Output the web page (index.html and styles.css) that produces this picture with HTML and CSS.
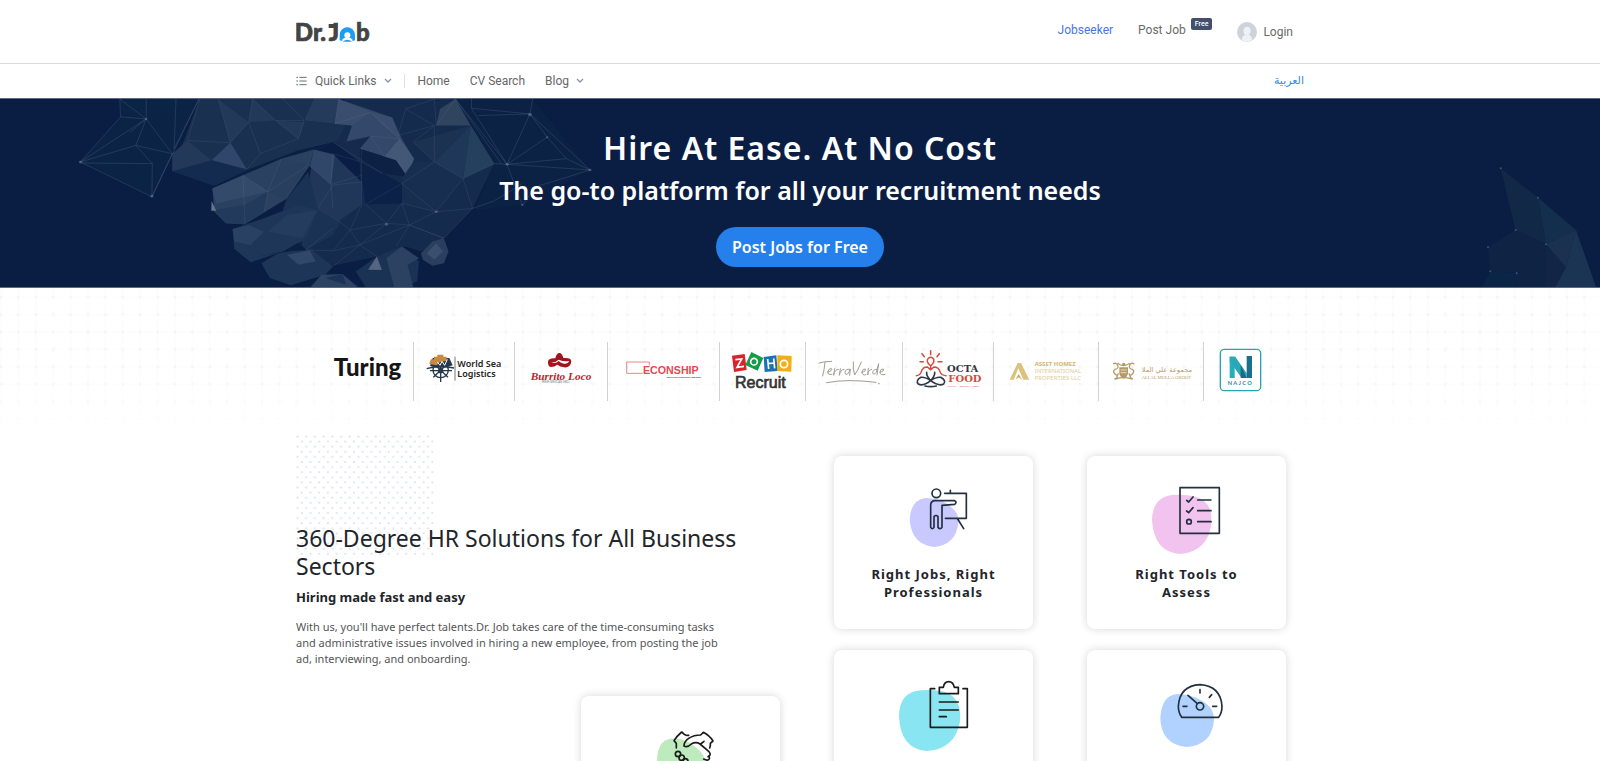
FILE: index.html
```html
<!DOCTYPE html>
<html lang="en">
<head>
<meta charset="utf-8">
<title>Dr.Job</title>
<link rel="stylesheet" href="styles.css">
</head>
<body>
<header class="header">
  <div class="container header-row">
    <a href="#" class="logo" aria-label="Dr.Job">
      <svg width="76" height="38" viewBox="0 -26 228 114">
        <g class="logo-text"><text x="-4" y="59">D</text><text x="51" y="59">r</text><text x="73" y="59">.</text><text x="98" y="59">J</text><text x="180" y="59">b</text></g>
        <path d="M98 7h26v12H98z" fill="#444"/>
        <path d="M131 56V40a23 23 0 0 1 46 0v16l-8 2v-5q-15-12-30 0v5z" fill="#1c9cf2"/>
        <circle cx="154" cy="41" r="9" fill="#fff"/>
        <path d="M140 60q14-12 28 0z" fill="#1c9cf2"/>
      </svg>
    </a>
    <nav class="account">
      <a href="#" class="active">Jobseeker</a>
      <a href="#" class="post">Post Job<span class="badge">Free</span></a>
      <a href="#" class="login">
        <svg width="20" height="20" viewBox="0 0 60 60"><circle cx="30" cy="30" r="30" fill="#ced2db"/><path d="M15 54q-1-13 10-15-6-5-6-13 1-12 11-12t11 12q0 8-6 13 11 2 10 15-15 10-30 0z" fill="#f0f1f5"/></svg>
        Login
      </a>
    </nav>
  </div>
</header>
<div class="subnav">
  <div class="container subnav-row">
    <nav class="links">
      <button type="button" class="quick">
        <svg width="11" height="10" viewBox="0 0 33 30"><path d="M10 4h22M10 15h22M10 26h22M1 4h5M1 15h5M1 26h5" stroke="#4c586a" stroke-width="2.6"/></svg>
        <span>Quick Links</span>
        <svg width="8" height="6" viewBox="0 0 8 6"><path d="M1 1l3 3 3-3" fill="none" stroke="#8792a4" stroke-width="1.3"/></svg>
      </button>
      <a href="#">Home</a>
      <a href="#">CV Search</a>
      <a href="#" class="blog">Blog <svg width="8" height="6" viewBox="0 0 8 6"><path d="M1 1l3 3 3-3" fill="none" stroke="#8792a4" stroke-width="1.3"/></svg></a>
    </nav>
    <a href="#" class="arabic" lang="ar">العربية</a>
  </div>
</div>
<main>
<section class="hero">
  <svg class="hands" viewBox="0 10 1568 567" preserveAspectRatio="none" aria-hidden="true">
    <g fill="#0c2848">
      <path d="M210 200L315 64 313 10H520L450 175 397 305z" opacity=".65"/>
      <path d="M1190 10H1392L1542 224 1365 330 1240 345 1292 205z" opacity=".4"/>
    </g>
    <path d="M900 10H1190L1292 205 1235 340 1160 430 1100 470 1060 455 985 485 860 515 800 465 850 380 945 330 940 200 870 140 900 60z" fill="#152b4e"/>
    <path d="M522 10H830L795 75 905 88 880 138 780 165 645 225 560 272 450 228z" fill="#1a3051"/>
    <path d="M450 175L490 135 553 195 530 215 450 228zM660 10L720 75 650 80zM720 75L795 80 780 130zM570 10L650 80 602 142z" fill="#22395a"/>
    <path d="M553 195L602 142 645 222z" fill="#30466a"/>
    <path d="M450 228L553 195 645 225 560 272z" fill="#122b4e"/>
    <path d="M645 225L780 165 880 138 830 165 700 205 570 275z" fill="#0b2144"/>
    <path d="M820 10H885L875 85 795 75z" fill="#253b5c"/>
    <path d="M885 10L1025 66 1050 130 1082 190 1065 245 1035 195 940 160 968 122 905 138 920 90 875 85z" fill="#33486a"/>
    <path d="M885 10L968 50 920 90 875 85zM968 50L1025 66 1045 130 1005 95z" fill="#3a4d6e"/>
    <path d="M1005 185L1045 130 1082 190 1065 245z" fill="#435777"/>
    <path d="M940 160L1035 195 1065 245 1000 235 945 240z" fill="#0d2145"/>
    <path d="M1050 250L1080 200 1135 200 1210 250 1140 350 1050 325z" fill="#182e50"/>
    <path d="M1190 10L1230 90 1140 90 1150 40z" fill="#30445f"/>
    <path d="M1230 90L1292 205 1210 250z" fill="#253f5e"/>
    <path d="M1230 90L1210 250 1135 200z" fill="#1f3859"/>
    <path d="M1135 200L1230 90 1080 140z" fill="#1b3253"/>
    <path d="M555 280L635 240 735 190 820 162 810 210 750 310 640 388 590 385 560 350z" fill="#2a4161"/>
    <path d="M555 280L635 240 700 290 565 325z" fill="#344a6b"/>
    <path d="M700 290L735 190 805 210 740 310z" fill="#293f60"/>
    <path d="M560 345L640 330 700 290 690 350 640 388 590 385z" fill="#223a5b"/>
    <path d="M553 318L565 347 552 347z" fill="#65748b"/>
    <path d="M820 162L870 175 900 210 945 260 945 330 885 378 830 340 805 280z" fill="#20375a"/>
    <path d="M820 162L875 180 865 268 810 213z" fill="#31476a"/>
    <path d="M945 240L1000 235 1050 265 1050 325 955 328z" fill="#0c2148"/>
    <path d="M740 340L750 310 805 230 830 340 890 380 870 420 800 465 740 400z" fill="#1a3254"/>
    <path d="M608 402L690 370 780 330 830 345 800 430 740 470 655 502 612 462z" fill="#1e3758"/>
    <path d="M608 402L650 390 690 410 655 450 612 440z" fill="#294263"/>
    <path d="M700 410L750 360 830 345 790 430z" fill="#243c5d"/>
    <path d="M683 505L735 470 815 465 870 515 850 540 760 572 705 550z" fill="#1d3657"/>
    <path d="M750 480L810 467 825 500 780 510z" fill="#30486a"/>
    <path d="M812 577L840 540 895 538 935 577z" fill="#2c4363"/>
    <path d="M850 550L895 538 905 570z" fill="#1b3456"/>
    <path d="M930 530L985 485 1050 455 1095 500 1090 560 1060 577H955z" fill="#1a3354"/>
    <path d="M1010 490L1050 455 1095 490 1065 510 1080 577 1030 577z" fill="#2c4262"/>
    <path d="M962 525L985 485 998 526z" fill="#536580"/>
    <path d="M1100 475L1130 440 1160 430 1172 470 1160 505 1130 513 1105 495z" fill="#293f60"/>
    <path d="M1115 475L1140 445 1158 470 1135 495z" fill="#3a4f6e"/>
    <path d="M650 490L740 470 790 440 785 465 700 480z" fill="#0b2144"/>
    <g fill="none" stroke="#5c7391" stroke-width="1.6" opacity=".5">
      <path d="M210 200L315 64 382 70 450 175 397 305 210 200 382 70V10M210 200L355 150 450 175M355 150L382 70M210 203L398 205 397 305M398 205L355 150M460 10L455 160 520 10 397 305M315 64L313 10 382 70 340 110"/>
      <path d="M1190 10L1325 207 1385 55 1392 10M1232 38L1385 55 1542 224 1325 207 1232 38V10M1385 55L1430 125 1480 190 1542 224 1400 275 1365 330 1325 207M1430 125L1325 207 1480 190M1250 60L1385 55M1190 10L1310 205M1292 205L1325 207M1235 340L1290 318 1365 265"/>
    </g>
    <g fill="none" stroke="#7d8fa6" stroke-width="1.3" opacity=".3">
      <path d="M522 10L490 135 602 142 570 10M602 142L650 80 660 10 720 75 780 130 680 175 650 80M795 75L720 75M680 175L645 222M740 10L795 75 780 130M885 10L875 85 968 50 1045 130 1005 185 968 122 1045 130"/>
      <path d="M635 240L640 385M635 240L700 290 735 190M700 290L690 350M805 210L700 290M810 213L865 268 870 175M865 268L870 340M865 268L945 240M945 260L870 270 830 340 885 378 915 405 945 330M1050 265L955 328 1010 385 915 405 870 468 940 450 1010 385 1070 390 1140 350 1210 250 1135 200 1050 265 1140 350 1050 325 1070 390 1035 455M1010 385L1050 325M1140 350L1235 340 1160 430 1070 390M1235 340L1210 250 1292 205M940 450L985 485M940 450L870 515M870 468L800 465 870 400M915 405L940 450 1070 390 1160 430"/>
      <path d="M1080 140L1135 90 1060 40 1135 10 1140 90 1190 10M1060 40L1040 120 1135 90 1135 200M1080 140L1135 200M870 175L945 200 1000 235 870 140M945 160L945 330"/>
    </g>
    <g fill="#8393aa" opacity=".45"><circle cx="210" cy="200" r="4"/><circle cx="397" cy="303" r="4"/><circle cx="382" cy="70" r="3"/><circle cx="1385" cy="57" r="5"/><circle cx="1325" cy="207" r="4"/><circle cx="1542" cy="224" r="4"/><circle cx="1430" cy="125" r="3"/><circle cx="1365" cy="330" r="3"/><circle cx="1010" cy="388" r="4"/><circle cx="1140" cy="350" r="4"/></g>
  </svg>
  <svg class="shape" viewBox="0 0 480 411" aria-hidden="true">
    <path d="M182 55L294 143 318 283 227 240z" fill="#122847"/><path d="M294 143L408 240 318 283z" fill="#142f4e"/>
    <path d="M318 283L408 240 377 352z" fill="#1b3150"/><path d="M408 240L468 411H346L377 352z" fill="#1c3453"/>
    <path d="M227 240L318 283 315 411H230V370L151 364 144 292z" fill="#0f2345"/><path d="M318 283L377 352 346 411H315z" fill="#122547"/>
    <path d="M144 292L151 364 230 370V411H125L151 364z" fill="#0b2546"/>
    <g fill="#3d5472"><circle cx="182" cy="55" r="3"/><circle cx="294" cy="143" r="3"/><circle cx="227" cy="240" r="3"/><circle cx="144" cy="292" r="3"/><circle cx="151" cy="364" r="3"/><circle cx="230" cy="370" r="3"/><circle cx="318" cy="283" r="3"/></g>
  </svg>
  <div class="hero-text">
    <h1>Hire At Ease. At No Cost</h1>
    <p>The go-to platform for all your recruitment needs</p>
    <button type="button" class="cta">Post Jobs for Free</button>
  </div>
</section>
<section class="partners">
  <svg class="mesh" aria-hidden="true"><defs><pattern id="mesh" x="9.7" y="0.5" width="17.4" height="17.4" patternUnits="userSpaceOnUse"><path d="M8.7 0V17.4M0 8.7H17.4" stroke="#fbfbfb"/><circle cx="8.7" cy="8.7" r="1.4" fill="#f4f4f4"/></pattern></defs><rect width="100%" height="100%" fill="url(#mesh)"/></svg>
  <ul class="container partner-list">
    <li><svg class="w97" viewBox="-9 36 291 177" role="img" aria-label="Turing"><text x="44" y="138" class="turing">Turing</text></svg></li>
    <li><svg class="w100" viewBox="282 36 300 177" role="img" aria-label="World Sea Logistics">
      <g fill="none" stroke="#27384d" stroke-width="4"><circle cx="362" cy="120" r="23"/><path d="M362 92v64M330 122h66M340 100l44 42M384 100l-44 42"/></g><circle cx="362" cy="122" r="8" fill="#27384d"/>
      <path d="M330 108l8-24h50l10 22q-34 14-68 2z" fill="#27384d"/><path d="M332 88h10v-8h10v-6h18v6h10v12l-20 4-10 10-22-4z" fill="#c58a45"/><path d="M352 96l8 10 6-12 8 12 8-18" fill="none" stroke="#fff" stroke-width="3"/><path d="M320 116q40-12 82-2" fill="none" stroke="#27384d" stroke-width="4"/>
      <path d="M405 80v72" stroke="#333" stroke-width="2"/><g class="wsl"><text x="412" y="110">World Sea</text><text x="412" y="142">Logistics</text></g></svg></li>
    <li><svg class="w92" viewBox="585 36 276 177" role="img" aria-label="Burrito Loco">
      <path d="M684 96q0-12 22-11 4-16 12-16t12 15q24-2 24 10-2 20-22 18-12-2-20-8-8 7-20 7-8-1-8-15z" fill="#a3141d"/><path d="M690 97q16 2 26-8 14 6 32 4-4 10-16 8-10-2-16-8-8 10-26 4z" fill="#fff"/>
      <text x="632" y="149" class="burrito">Burrito Loco</text><text x="665" y="160" class="tiny">FRESH MEXICAN GRILL</text></svg></li>
    <li><svg class="w111" viewBox="864 36 333 177" role="img" aria-label="Econship"><path d="M968 130H920V96h68v10" fill="none" stroke="#e5484f" stroke-width="2"/><text x="969" y="131" class="econ">ECONSHIP</text><text x="1040" y="143" class="econ-sub">Excellence Enterprise Maritime</text></svg></li>
    <li><svg class="w85" viewBox="60 36 255 177" role="img" aria-label="Zoho Recruit">
      <path d="M96 77l38-5 6 48-38 6z" fill="#d8232f"/><path d="M154 66l36 18-17 38-37-17z" fill="#159c48"/><path d="M191 81l38-5 4 47-39 3z" fill="#1a71b8"/><path d="M232 76l43 2-1 47-42-2z" fill="#f3ae17"/>
      <g fill="none" stroke="#fff" stroke-width="5"><path d="M106 89l19-2-14 25 21-3M203 87l3 30M221 85l3 30M204 101l18-2"/><circle cx="162" cy="95" r="10"/><circle cx="252" cy="102" r="11"/></g>
      <text x="105" y="175" class="zoho">Recruit</text></svg></li>
    <li><svg class="w96" viewBox="318 36 288 177" role="img" aria-label="TerraVerde">
      <g fill="none" stroke="#a29c97" stroke-width="3" stroke-linecap="round" stroke-linejoin="round"><path d="M357 99q15-5 38-5M375 97q-2 22-7 41M383 126q15-3 12-10-7-3-11 8-3 12 12 9M404 116l-3 20q3-18 14-18M421 116l-3 20q3-18 14-18M449 118q-13-3-14 10 1 9 10 2l6-13-2 19M460 96q-2 24 4 39 11-16 20-39M486 127q14-4 10-10-8-2-10 9 0 12 12 8M505 115l-2 20q2-17 12-17M531 118q-13-1-13 12 3 7 11-3l7-26-5 34M540 127q14-4 10-10-8-2-10 9 0 12 15 7"/><path d="M380 158q60-12 148-1M535 161h3"/></g></svg></li>
    <li><svg class="w90" viewBox="609 36 270 177" role="img" aria-label="Octa Food">
      <g fill="none" stroke="#d84a3b" stroke-width="4.5" stroke-linecap="round"><path d="M692 62v12M666 71l7 9M718 71l-7 9M660 95h10M714 95h12M692 108q-16-14-7-23 7-6 14 0 8 9-7 23v8M649 137q12-1 15-12 4-14 18-14l10 8 10-8q14 0 18 14 3 11 18 12"/></g>
      <g fill="none" stroke="#303846" stroke-width="5" stroke-linecap="round"><path d="M692 152q-17-12-30-10-16 10-7 20 14 8 37-10 14-16 12-25M692 152q17-12 30-10 18 10 9 20-14 8-39-10-14-16-12-25M675 168q17 4 34 0"/></g>
      <g class="octa"><text x="741" y="126" fill="#303846">OCTA</text><text x="745" y="156" fill="#d84a3b">FOOD</text></g><text x="741" y="171" class="tiny-red">HEALTHY · YOUR WAY · FRESH</text></svg></li>
    <li><svg class="w104" viewBox="12 36 312 177" role="img" aria-label="Asset Homez International Properties LLC"><path d="M59 149l24-50h10l25 50h-18l-15-34-14 34z" fill="#dcc27e"/><path d="M76 149l10-17 10 17-10-7z" fill="#cba958"/>
      <g class="asset"><text x="134" y="108" class="strong">ASSET HOMEZ</text><text x="134" y="129">INTERNATIONAL</text><text x="134" y="149">PROPERTIES LLC</text></g></svg></li>
    <li><svg class="w104" viewBox="327 36 312 177" role="img" aria-label="Ali Al Mulla Group">
      <g fill="none" stroke="#b59a68" stroke-width="4"><path d="M369 102q10-6 14 4t-8 12q-8 6 0 14t10-2q-6 20-12 16M433 102q-10-6-14 4t8 12q8 6 0 14t-10-2q6 20 12 16M383 100q18 14 36 0M376 147q25-8 50 0"/></g><path d="M388 112h26v20q-3 10-13 14-10-4-13-14z" fill="#b59a68"/><path d="M392 120h18M392 128h18" stroke="#fff" stroke-width="2"/><circle cx="401" cy="103" r="5" fill="#b59a68"/>
      <text x="455" y="126" class="mulla-ar">مجموعة علي الملا</text><text x="455" y="148" class="mulla">ALI AL MULLA GROUP</text></svg></li>
    <li><svg class="w76" viewBox="642 36 228 177" role="img" aria-label="Najco"><rect x="691" y="58" width="121" height="124" rx="12" fill="none" stroke="#2aa3b0" stroke-width="4"/><path d="M719 144V80h15v64z" fill="#21b0ba"/><path d="M719 80h17l34 50v14h-15L719 94z" fill="#2ba8b5"/><path d="M770 78h16v66h-16z" fill="#1b6f8c"/><path d="M770 144h-18v-40z" fill="#1c6886"/><text x="713" y="166" class="najco">NAJCO</text></svg></li>
  </ul>
</section>
<section class="container solutions">
  <div class="intro">
    <svg class="dots" aria-hidden="true"><defs><pattern id="dots" width="8.7" height="10.2" patternUnits="userSpaceOnUse"><circle cx="1.5" cy="1.5" r="1.1" fill="#dde3ee"/><circle cx="5.8" cy="6.6" r="1.1" fill="#dde3ee"/></pattern></defs><rect width="100%" height="100%" fill="url(#dots)"/></svg>
    <h2>360-Degree HR Solutions for All Business Sectors</h2>
    <h3>Hiring made fast and easy</h3>
    <p>With us, you'll have perfect talents.Dr. Job takes care of the time-consuming tasks and administrative issues involved in hiring a new employee, from posting the job ad, interviewing, and onboarding.</p>
    <article class="card side"><svg class="icon" viewBox="906 828 597 327"><path d="M1134 1020q2-58 40-64 44-4 76 26 32 24 32 60 0 64-70 66-76-10-78-88z" fill="#bdebbd"/>
      <g class="ink dark"><path d="M1192 984v-14l-7-8q9-14 23-26l8 7q6 4 13 3M1292 984q3-8 2-14l8-7q-10-16-29-26l-8 8q-20 0-36 10-14 10-14 23 10 6 22-6 14-8 26 0l26 22q10 12-2 16M1265 972l10-8M1289 1008q7 10-5 13l-10-4"/><circle cx="1197" cy="1002" r="8"/><circle cx="1208" cy="1013" r="8"/><circle cx="1219" cy="1024" r="8"/></g></svg></article>
  </div>
  <div class="cards">
    <article class="card"><svg class="icon" viewBox="42 48 597 327"><path d="M269 240q2-60 48-66 54 0 82 32 20 18 16 44-8 66-74 71-66-8-72-81z" fill="#c9c9ff"/>
      <g class="ink"><circle cx="349" cy="160" r="13"/><path d="M332 262v-66q0-14 14-14h58q8 4 0 11l-38 3v66q-5 8-12 0v-32q-6-7-12 0v32q-5 8-10 0zM374 160h65v75h-63M391 151v8M413 237l18 29"/></g></svg><h4>Right Jobs, Right Professionals</h4></article>
    <article class="card"><svg class="icon" viewBox="800 48 597 327"><path d="M995 240q2-70 62-75 66-4 94 18 26 20 22 68-10 82-92 91-80-4-86-102z" fill="#f1c3ee"/>
      <g class="ink"><path d="M1079 143h118v137h-118zM1132 180h40M1132 212h40M1132 245h40M1099 181l6 5 13-15M1099 213l6 5 13-15"/><circle cx="1106" cy="245" r="7"/></g></svg><h4>Right Tools to Assess</h4></article>
    <article class="card"><svg class="icon" viewBox="42 630 597 327"><path d="M237 830q0-74 66-79 68-6 94 18 30 26 22 80-16 80-100 84-78-8-82-103z" fill="#88e5f1"/>
      <g class="ink dark"><path d="M344 746h-13v116h111V746h-13M358 761v-19h12q3-17 16-17t17 17h12v19zM358 786h57M358 810h57M358 830h21"/></g></svg></article>
    <article class="card"><svg class="icon" viewBox="800 630 597 327"><path d="M1020 834q4-68 50-72 42 0 74 20 38 20 37 58-6 76-83 81-76-8-78-87z" fill="#b1d2fe"/>
      <g class="ink"><path d="M1084 832q-10-14-10-33 4-62 65-65 62 4 66 65 0 20-10 33zM1103 766l28 25M1139 749v10M1174 764l-7 8M1088 799h12M1177 799h12"/><circle cx="1139" cy="799" r="11"/></g></svg></article>
  </div>
</section>
</main>
</body>
</html>
```
FILE: styles.css
```css
* { box-sizing: border-box; }
body {
  margin: 0;
  background: #fff;
  color: #212529;
  font-family: "Noto Sans", "Open Sans", sans-serif;
}
a { color: inherit; text-decoration: none; }
button { font: inherit; color: inherit; border: 0; background: none; padding: 0; cursor: pointer; }
h1, h2, h3, h4, p, ul { margin: 0; padding: 0; }
.container { width: 100%; max-width: 1008px; margin: 0 auto; }

.header { border-bottom: 1px solid #d9dadc; font: 12px/16px Roboto, sans-serif; color: #6a6a6a; }
.header-row { display: flex; justify-content: space-between; align-items: center; height: 63px; padding-right: 11px; }
.logo svg { display: block; }
.logo-text { font: 900 72px Lato, sans-serif; fill: #444; stroke: #444; stroke-width: 2; }
.account { display: flex; align-items: flex-start; gap: 25px; }
.active { color: #4a74e8; }
.post { display: flex; align-items: flex-start; gap: 5px; }
.badge { margin-top: -4px; padding: 0 4px; border-radius: 2px; background: #42506c; color: #fff; font-size: 7px; line-height: 12px; font-weight: 500; }
.login { display: flex; align-items: center; gap: 6px; }

.subnav { font: 12px/16px Roboto, sans-serif; color: #666; }
.subnav-row { display: flex; justify-content: space-between; align-items: center; height: 34px; }
.links { display: flex; align-items: center; gap: 20px; }
.quick { display: flex; align-items: center; gap: 8px; padding-right: 12px; margin-right: -8px; border-right: 1px solid #dfe1e6; line-height: 14px; }
.blog { display: flex; align-items: center; gap: 7px; }
.arabic { color: #2f8fea; font: 11px/16px "DejaVu Sans", sans-serif; }

.hero { position: relative; overflow: hidden; background: #0a1e43; border-top: 1px solid #5d6a84; border-bottom: 1px solid #5d6a84; }
.hands { position: absolute; left: 0; top: 0; width: 600px; height: 100%; }
.shape { position: absolute; right: 0; bottom: 0; width: 160px; height: 137px; }
.hero-text { position: relative; display: flex; flex-direction: column; align-items: center; padding: 29px 16px 20px; color: #fff; text-align: center; }
.hero h1 { font-size: 32px; line-height: 40px; font-weight: 600; letter-spacing: 1px; }
.hero p { margin-top: 4px; font-size: 25px; line-height: 36px; font-weight: 600; }
.cta { margin-top: 19px; height: 40px; padding: 0 16px; border-radius: 20px; background: #2680eb; color: #fff; font-size: 16px; line-height: 20px; font-weight: 600; }

.partners { position: relative; padding: 54px 0 34px; }
.mesh { position: absolute; left: 0; top: 0; width: 100%; height: 100%; -webkit-mask-image: linear-gradient(#000 60%, transparent); mask-image: linear-gradient(#000 60%, transparent); }
.partner-list { position: relative; display: flex; justify-content: center; list-style: none; padding-right: 4px; }
.partner-list li + li { border-left: 1px solid #d2d2d2; }
.partner-list svg { display: block; height: 59px; }
.w76 { width: 76px; } .w85 { width: 85px; } .w90 { width: 90px; } .w92 { width: 92px; } .w96 { width: 96px; }
.w97 { width: 97px; } .w100 { width: 100px; } .w104 { width: 104px; } .w111 { width: 111px; }
.turing { font: 900 72px Lato, sans-serif; fill: #151515; }
.wsl { font: 600 27px "Noto Sans", sans-serif; fill: #222; }
.burrito { font: italic 700 34px "Liberation Serif", serif; fill: #c8202c; }
.tiny { font: 8px "Noto Sans", sans-serif; fill: #777; }
.econ { font: 900 32px "Liberation Sans", sans-serif; fill: #e5484f; }
.econ-sub { font: 700 7px "Liberation Sans", sans-serif; fill: #444; }
.zoho { font: 500 48px "Liberation Sans", sans-serif; fill: #333; stroke: #333; stroke-width: 2; }
.octa { font: 700 30px "DejaVu Serif", serif; }
.tiny-red { font: 7px "Noto Sans", sans-serif; fill: #d84a3b; }
.asset { font: 18px "Noto Sans", sans-serif; fill: #dfcc9b; }
.strong { font-weight: 700; fill: #d0b570; }
.mulla-ar { font: 20px "DejaVu Sans", sans-serif; fill: #b59a68; }
.mulla { font: 14px "Liberation Serif", serif; fill: #b59a68; }
.najco { font: 700 17px Lato, sans-serif; fill: #278fa0; letter-spacing: 4px; }

.solutions { display: flex; gap: 54px; padding: 0 18px 40px 0; }
.intro { position: relative; flex: 1; display: flex; flex-direction: column; padding-top: 89px; }
.dots { position: absolute; left: 0; top: 0; width: 139px; height: 123px; }
.intro h2 { position: relative; font-size: 23px; line-height: 28px; font-weight: 400; }
.intro h3 { margin-top: 7px; font-size: 13px; line-height: 20px; font-weight: 700; }
.intro p { margin-top: 12px; max-width: 436px; font-size: 11px; line-height: 16px; color: #555; }
.side { align-self: flex-end; margin-top: 29px; }
.cards { display: grid; grid-template-columns: 199px 199px; gap: 21px 54px; padding-top: 21px; align-content: start; }
.card { width: 199px; min-height: 173px; border-radius: 8px; background: #fff; box-shadow: 0 0 8px rgba(0, 0, 0, 0.16); text-align: center; }
.icon { display: block; width: 100%; height: 109px; }
.card h4 { padding: 0 36px 27px; font-size: 13px; line-height: 18px; font-weight: 700; letter-spacing: 1px; }
.ink { fill: none; stroke: #22303f; stroke-width: 5; stroke-linecap: round; stroke-linejoin: round; }
.dark { stroke: #1b1b1b; }
```
